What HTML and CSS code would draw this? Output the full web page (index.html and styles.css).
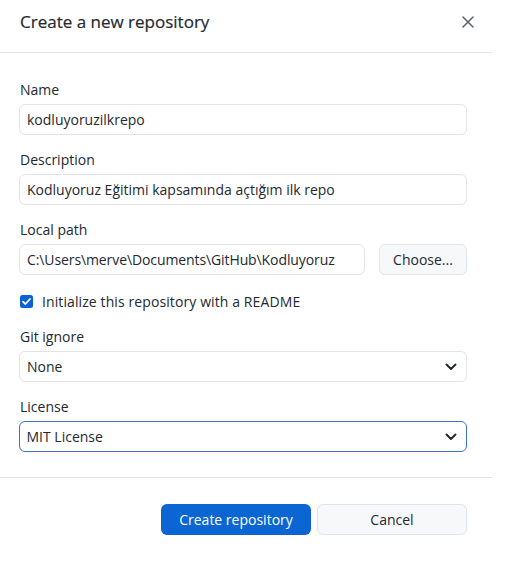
FILE: index.html
```html
<!DOCTYPE html>
<html lang="tr">
<head>
<meta charset="utf-8">
<title>Create a new repository</title>
<link rel="stylesheet" href="styles.css">
</head>
<body>
<div class="dialog">
  <header class="dialog-header">
    <h1 class="dialog-title">Create a new repository</h1>
    <button class="close-btn" aria-label="Close">
      <svg width="12" height="12" viewBox="0 0 12 12"><path d="M1 1 L11 11 M11 1 L1 11" stroke="#59626b" stroke-width="1.5" stroke-linecap="round" fill="none"/></svg>
    </button>
  </header>
  <form class="dialog-body">
    <div class="field">
      <label class="label">Name</label>
      <div class="input">kodluyoruzilkrepo</div>
    </div>
    <div class="field">
      <label class="label">Description</label>
      <div class="input">Kodluyoruz Eğitimi kapsamında açtığım ilk repo</div>
    </div>
    <div class="field">
      <label class="label">Local path</label>
      <div class="path-row">
        <div class="input path-input">C:\Users\merve\Documents\GitHub\Kodluyoruz</div>
        <div class="btn btn-secondary choose-btn">Choose...</div>
      </div>
    </div>
    <div class="check-row">
      <span class="checkbox">
        <svg width="13" height="13" viewBox="0 0 13 13"><rect x="0" y="0" width="13" height="13" rx="2.5" fill="#0b62d5"/><path d="M3 6.7 L5.4 9 L10 4" stroke="#fff" stroke-width="1.8" fill="none" stroke-linecap="round" stroke-linejoin="round"/></svg>
      </span>
      <span class="check-label">Initialize this repository with a README</span>
    </div>
    <div class="field">
      <label class="label">Git ignore</label>
      <div class="input select">None
        <svg class="chev" width="12" height="8" viewBox="0 0 12 8"><path d="M1.5 1.5 L6 6 L10.5 1.5" stroke="#24292f" stroke-width="2" fill="none" stroke-linecap="round" stroke-linejoin="round"/></svg>
      </div>
    </div>
    <div class="field">
      <label class="label">License</label>
      <div class="input select focused">MIT License
        <svg class="chev" width="12" height="8" viewBox="0 0 12 8"><path d="M1.5 1.5 L6 6 L10.5 1.5" stroke="#24292f" stroke-width="2" fill="none" stroke-linecap="round" stroke-linejoin="round"/></svg>
      </div>
    </div>
  </form>
  <footer class="dialog-footer">
    <div class="btn btn-primary">Create repository</div>
    <div class="btn btn-secondary">Cancel</div>
  </footer>
</div>
</body>
</html>
```

FILE: styles.css
```css
* { box-sizing: border-box; }
html, body {
  margin: 0;
  padding: 0;
  background: #ffffff;
}
body {
  font-family: "Open Sans", "Noto Sans", "Liberation Sans", sans-serif;
  font-size: 14px;
  color: #24292f;
}
.dialog {
  width: 492px;
  background: #fff;
}
.dialog-header {
  height: 53px;
  display: flex;
  align-items: center;
  justify-content: space-between;
  padding: 0 18px 9px 20px;
  border-bottom: 1px solid #e4e4e4;
}
.dialog-title {
  margin: 0;
  font-size: 17px;
  font-weight: 500;
  color: #24292f;
  -webkit-text-stroke: 0.2px #24292f;
}
.close-btn {
  border: 0;
  background: none;
  padding: 0;
  width: 12px;
  height: 12px;
  display: flex;
}
.dialog-body {
  margin: 0;
  padding: 27px 25px 25px 19px;
  display: flex;
  flex-direction: column;
  gap: 15px;
  border-bottom: 1px solid #e4e4e4;
}
.field {
  display: flex;
  flex-direction: column;
  gap: 4px;
}
.label {
  line-height: 20px;
  padding-left: 1px;
}
.input {
  height: 31px;
  border: 1px solid #e1e4e8;
  border-radius: 6px;
  padding: 0 7px;
  display: flex;
  align-items: center;
  white-space: nowrap;
  overflow: hidden;
  color: #24292f;
}
.path-row {
  display: flex;
  gap: 14px;
}
.path-input {
  flex: 1;
  letter-spacing: -0.1px;
}
.check-row {
  height: 22px;
  display: flex;
  align-items: center;
  gap: 9px;
}
.checkbox {
  display: flex;
  width: 13px;
  height: 13px;
  margin-left: 1px;
}
.check-label {
  letter-spacing: 0.1px;
}
.select {
  justify-content: space-between;
  padding-right: 9px;
}
.chev {
  flex: none;
}
.focused {
  border: 1.5px solid #3b74c2;
  padding-left: 6.5px;
}
.dialog-footer {
  display: flex;
  justify-content: flex-end;
  gap: 6px;
  padding: 26px 25px 0 0;
}
.btn {
  height: 31px;
  border-radius: 6px;
  display: flex;
  align-items: center;
  justify-content: center;
  white-space: nowrap;
}
.btn-primary {
  width: 150px;
  background: #0b66d4;
  color: #ffffff;
  font-weight: 500;
}
.btn-secondary {
  width: 150px;
  background: #f6f8fa;
  border: 1px solid #e1e4e8;
  color: #24292f;
}
.choose-btn.btn-secondary {
  width: 88px;
}
```
